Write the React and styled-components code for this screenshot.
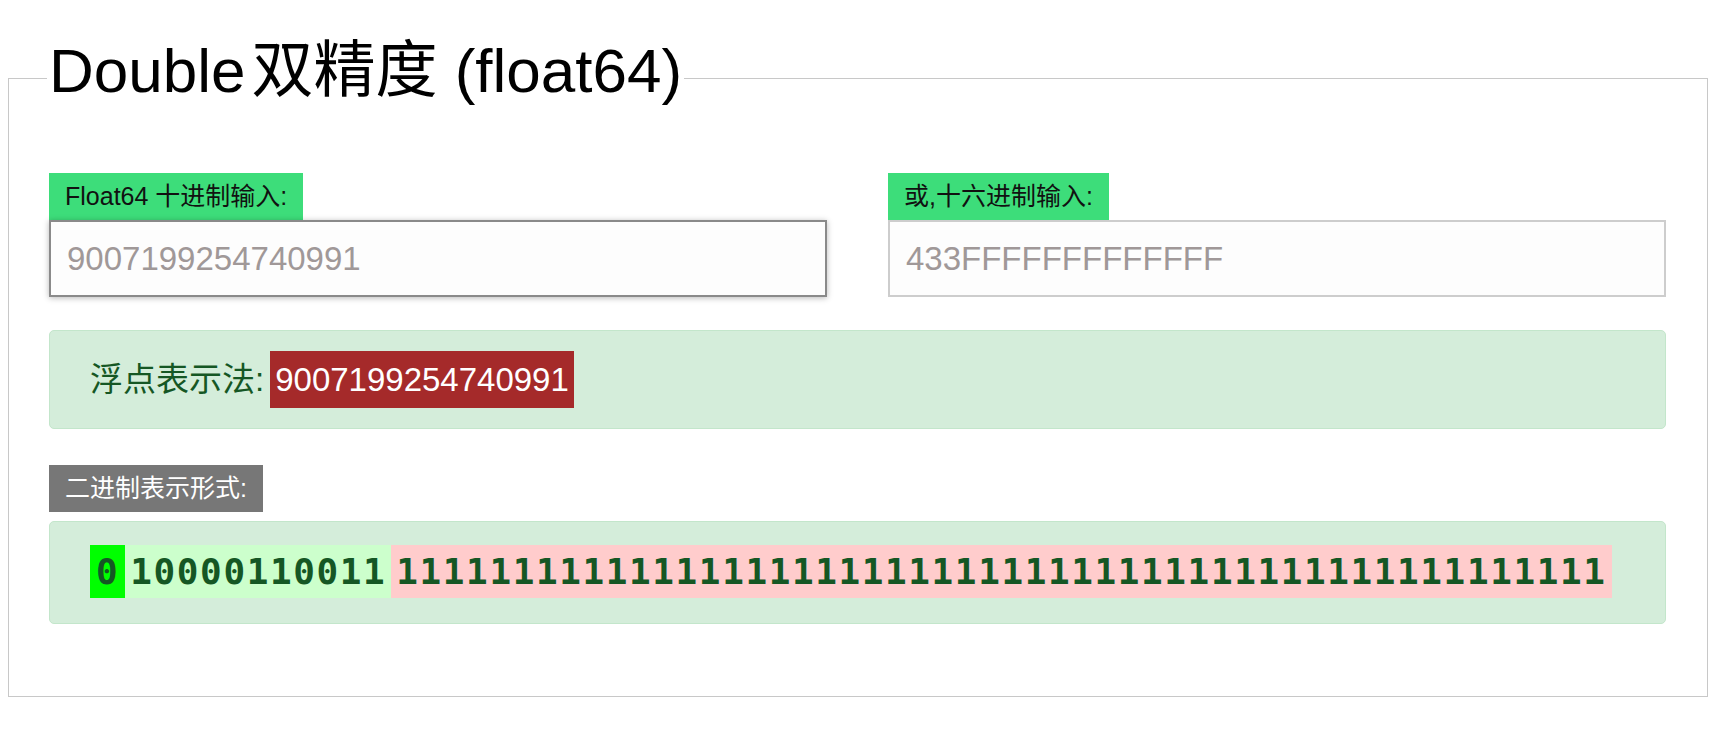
import React from 'react';
import styled, { createGlobalStyle } from 'styled-components';

const GlobalStyle = createGlobalStyle`
  body {
    margin: 8px;
    background: #fff;
    font-family: "Liberation Sans", "Noto Sans CJK SC", sans-serif;
  }
`;

const Fieldset = styled.fieldset`
  margin: 27px 0 0;
  padding: 0;
  min-width: 0;
  border: 1px solid #c8c8c8;
`;

const Legend = styled.legend`
  margin-left: 38px;
  padding: 0 2px 14px;
  font-size: 62px;
  line-height: 72px;
  color: #000;
`;

const Cjk = styled.span`
  margin-left: 6px;
`;

const Body = styled.div`
  padding: 52px 41px 72px 40px;
`;

const InputRow = styled.div`
  display: grid;
  grid-template-columns: 1fr 1fr;
  column-gap: 61px;
`;

const Field = styled.div`
  display: flex;
  flex-direction: column;
  align-items: flex-start;
  margin-top: ${p => p.$gap || 0}px;
`;

const Tag = styled.span`
  display: inline-block;
  padding: 6px 16px;
  font-size: 25px;
  line-height: 35px;
  background: ${p => (p.$muted ? '#777' : '#3ddd7a')};
  color: ${p => (p.$muted ? '#fff' : '#111')};
  margin-bottom: ${p => (p.$muted ? 9 : 0)}px;
`;

const Input = styled.input`
  box-sizing: border-box;
  width: 100%;
  height: 77px;
  margin: 0;
  padding: 0 16px;
  border: 2px solid ${p => (p.$focused ? '#8a8a8a' : '#cdcdcd')};
  box-shadow: ${p => (p.$focused ? '0 1px 6px rgba(0, 0, 0, 0.28)' : 'none')};
  background: #fdfdfd;
  font-family: "Liberation Sans", sans-serif;
  font-size: 33px;
  color: #a09898;
  outline: none;

  &::placeholder {
    color: #a09898;
  }
`;

const Alert = styled.div`
  display: flex;
  align-items: center;
  margin-top: 33px;
  padding: 20px 40px;
  border: 1px solid #c3e6cb;
  border-radius: 5px;
  background: #d4edda;
  color: #155724;
  font-size: 33px;
  line-height: 47px;
`;

const Badge = styled.span`
  margin-left: 6px;
  padding: 5px;
  background: #a52a2a;
  color: #fff;
`;

const BitsBox = styled(Alert)`
  margin-top: 0;
  padding: 23px 40px 25px;
`;

const bitColors = {
  sign: '#00ff00',
  exponent: '#ccffcc',
  mantissa: '#ffcccc',
};

const Bits = styled.span`
  padding: 5px ${p => (p.$part === 'sign' ? 6 : 5)}px;
  font-family: "DejaVu Sans Mono", "Liberation Mono", monospace;
  font-weight: bold;
  font-size: 36px;
  letter-spacing: 1.6px;
  line-height: 43px;
  color: #155724;
  background: ${p => bitColors[p.$part]};
`;

const value = '9007199254740991';
const sign = '0';
const exponent = '10000110011';
const mantissa = '1'.repeat(52);

export default function App() {
  return (
    <>
      <GlobalStyle />
      <Fieldset>
        <Legend>
          Double<Cjk>双精度</Cjk> (float64)
        </Legend>
        <Body>
          <InputRow>
            <Field>
              <Tag>Float64 十进制输入:</Tag>
              <Input $focused placeholder={value} />
            </Field>
            <Field>
              <Tag>或,十六进制输入:</Tag>
              <Input placeholder="433FFFFFFFFFFFFF" />
            </Field>
          </InputRow>

          <Alert>
            浮点表示法:<Badge>{value}</Badge>
          </Alert>

          <Field $gap={36}>
            <Tag $muted>二进制表示形式:</Tag>
          </Field>
          <BitsBox>
            <Bits $part="sign">{sign}</Bits>
            <Bits $part="exponent">{exponent}</Bits>
            <Bits $part="mantissa">{mantissa}</Bits>
          </BitsBox>
        </Body>
      </Fieldset>
    </>
  );
}
